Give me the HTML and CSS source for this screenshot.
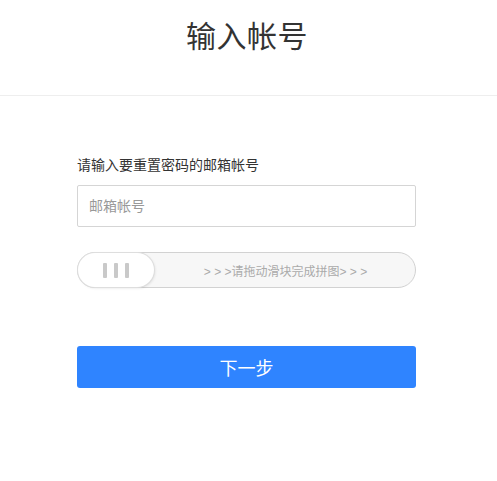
FILE: index.html
```html
<!DOCTYPE html>
<html lang="zh-CN">
<head>
<meta charset="utf-8">
<title>输入帐号</title>
<link rel="stylesheet" href="styles.css">
</head>
<body>
<header class="header">
  <h1 class="title">输入帐号</h1>
</header>
<main class="form">
  <label class="label" for="email">请输入要重置密码的邮箱帐号</label>
  <input class="input" id="email" type="text" placeholder="邮箱帐号">
  <div class="slider">
    <div class="handle">
      <span class="bar"></span><span class="bar"></span><span class="bar"></span>
    </div>
    <div class="slider-text">&gt; &gt; &gt;请拖动滑块完成拼图&gt; &gt; &gt;</div>
  </div>
  <button class="btn" type="button">下一步</button>
</main>
</body>
</html>
```
FILE: styles.css
```css
* { box-sizing: border-box; }
html, body { margin: 0; padding: 0; background: #fff; }
body {
  font-family: "Liberation Sans", "Noto Sans CJK SC", sans-serif;
  color: #333;
}
.header {
  height: 96px;
  border-bottom: 1px solid #eeeeee;
  display: flex;
  justify-content: center;
  padding-top: 17px;
}
.title {
  margin: 0;
  font-weight: normal;
  font-size: 30px;
  line-height: 40px;
  color: #333;
  padding-right: 3px;
  letter-spacing: 0.5px;
}
.form {
  width: 416px;
  padding-left: 77px;
  padding-top: 60px;
  display: flex;
  flex-direction: column;
}
.label {
  font-size: 14px;
  line-height: 19px;
  color: #333;
  margin-bottom: 10px;
}
.input {
  height: 42px;
  border: 1px solid #d5d5d5;
  border-radius: 2px;
  padding: 0 11px;
  font-family: inherit;
  font-size: 14px;
  color: #333;
  outline: none;
  margin: 0;
}
.input::placeholder { color: #999; }
.slider {
  margin-top: 25px;
  height: 36px;
  border: 1px solid #d2d2d2;
  border-radius: 18px;
  background: #f7f7f7;
  display: flex;
  align-items: center;
  position: relative;
}
.handle {
  width: 76px;
  height: 34px;
  border-radius: 17px;
  background: #fff;
  box-shadow: 0 0 0 1px #dedede, 1px 1px 3px rgba(0,0,0,0.12);
  display: flex;
  justify-content: center;
  align-items: center;
  gap: 7px;
  flex: none;
}
.bar {
  width: 4px;
  height: 15px;
  background: #c9c9c9;
  border-radius: 1px;
}
.slider-text {
  flex: 1;
  text-align: center;
  font-size: 12px;
  color: #aaa;
  padding-left: 2px;
}
.btn {
  margin-top: 58px;
  height: 42px;
  border: none;
  border-radius: 3px;
  background: #2f84ff;
  color: #fff;
  font-family: inherit;
  font-size: 18px;
  padding: 0;
}
```
